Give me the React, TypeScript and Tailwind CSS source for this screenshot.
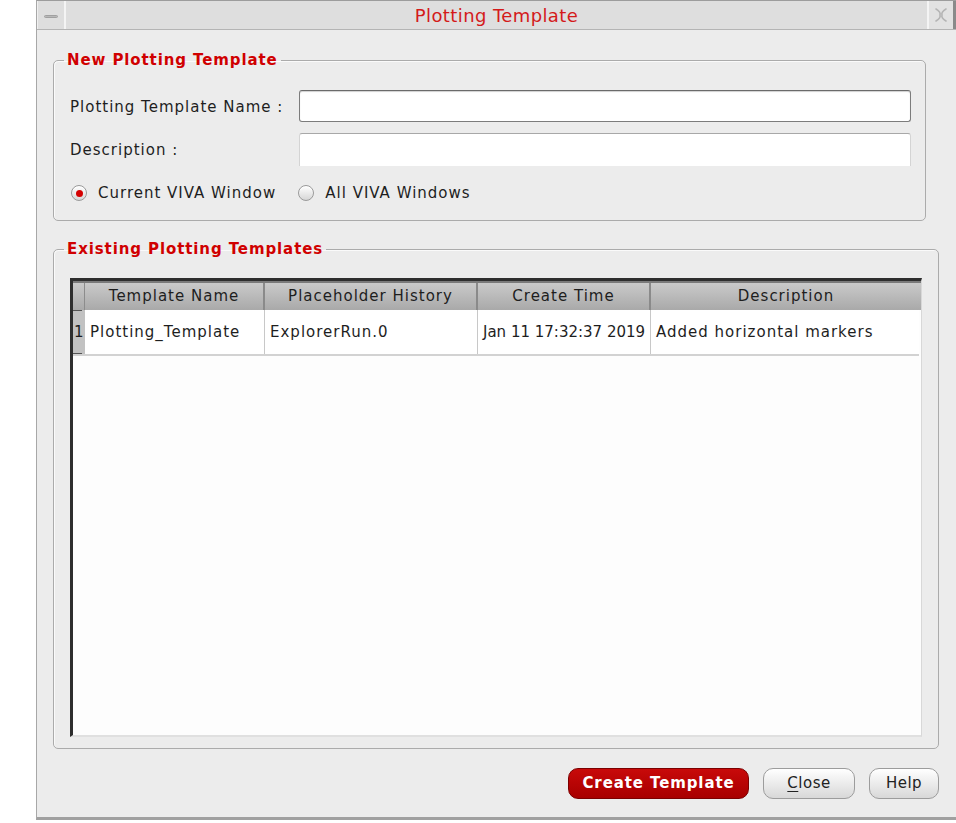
import React from 'react';

const columns = ['Template Name', 'Placeholder History', 'Create Time', 'Description'];

const rows = [
  { name: 'Plotting_Template', history: 'ExplorerRun.0', time: 'Jan 11 17:32:37 2019', description: 'Added horizontal markers' },
];

function Radio({ checked, label }: { checked?: boolean; label: string }) {
  return (
    <label className="flex items-center gap-[11px]">
      <span className="w-[16px] h-[16px] rounded-full border border-[#9a9a9a] bg-gradient-to-b from-white to-[#d6d6d6] flex items-center justify-center shadow-[inset_0_1px_1px_rgba(255,255,255,0.9)]">
        {checked && <span className="w-[7px] h-[7px] rounded-full bg-[#d40000]" />}
      </span>
      <span>{label}</span>
    </label>
  );
}

export default function App() {
  return (
    <div className="w-[956px] h-[823px] bg-white pl-[36px] font-['DejaVu_Sans','Liberation_Sans',sans-serif] text-[15px] tracking-[1px] text-[#1e1e1e]">
      <div className="h-[820px] flex flex-col border-l border-t border-b-[3px] border-l-[#a8a8a8] border-t-[#9c9c9c] border-b-[#a0a0a0] bg-[#ececec] overflow-hidden">
        {/* Title bar */}
        <div className="h-[29px] flex bg-[#dedede] border-b border-[#b4b4b4]">
          <div className="w-[29px] flex items-center justify-center border-r-2 border-r-[#f4f4f4] border-l border-l-[#f0f0f0]">
            <span className="w-[14px] h-[3px] mt-[3px] rounded-sm bg-[#b8b8b8] border border-[#a0a0a0]" />
          </div>
          <div className="flex-1 flex items-center justify-center text-[18px] tracking-[0.4px] text-[#d41a1a]">Plotting Template</div>
          <div className="w-[29px] flex items-center justify-center border-l-2 border-l-[#f4f4f4] border-r-[3px] border-r-[#8a8a8a] bg-[#e2e2e2]">
            <svg width="14" height="16" viewBox="0 0 14 16" fill="none" stroke="#b4b4b4" strokeWidth="1.6" strokeLinecap="round">
              <path d="M2 2Q7 5 6 8Q7 11 2 14" />
              <path d="M12 2Q7 5 8 8Q7 11 12 14" />
            </svg>
          </div>
        </div>

        <div className="flex-1 flex flex-col pl-[16px] pr-[17px]">
          {/* New plotting template */}
          <fieldset className="mt-[21px] mr-[13px] border border-[#ababab] rounded-[5px] pl-[16px] pr-[14px] pt-[21px] pb-[17px] shadow-[inset_1px_1px_0_#fafafa]">
            <legend className="-ml-[6px] px-[3px] text-[#d00000] font-bold leading-[18px] tracking-[0.9px]">New Plotting Template</legend>
            <div className="flex items-center h-[32px]">
              <span className="w-[229px] pt-[2px]">Plotting Template Name :</span>
              <div className="flex-1 h-[32px] bg-white rounded-[3px] border border-[#7c7c7c] border-t-[#6a6a6a] shadow-[inset_0_1px_1px_#d0d0d0]" />
            </div>
            <div className="flex items-center h-[33px] mt-[11px]">
              <span className="w-[229px] pt-[2px]">Description :</span>
              <div className="flex-1 h-[33px] bg-white rounded-t-[3px] border-t border-x border-t-[#a8a8a8] border-x-[#d4d4d4]" />
            </div>
            <div className="flex items-center gap-[22px] h-[20px] mt-[17px] ml-[1px]">
              <Radio checked label="Current VIVA Window" />
              <Radio label="All VIVA Windows" />
            </div>
          </fieldset>

          {/* Existing plotting templates */}
          <fieldset className="flex-1 mt-[19px] border border-[#ababab] rounded-[5px] pl-[16px] pr-[16px] pt-[20px] pb-[11px] flex flex-col shadow-[inset_1px_1px_0_#fafafa]">
            <legend className="-ml-[6px] px-[3px] text-[#d00000] font-bold leading-[18px] tracking-[0.9px]">Existing Plotting Templates</legend>
            <div className="flex-1 flex flex-col border-t-[3px] border-l-[3px] border-[#2e2e2e] border-r border-r-[#d8d8d8] border-b-2 border-b-[#e0e0e0] bg-[#fdfdfd]">
              <div className="grid grid-cols-[12px_180px_213px_173px_1fr] h-[29px] border-t-2 border-t-[#7a7a7a] bg-gradient-to-b from-[#cacaca] to-[#a9a9a9]">
                <div className="border-r border-[#8c8c8c]" />
                {columns.map((col, i) => (
                  <div
                    key={col}
                    className={`flex items-center justify-center ${i < columns.length - 1 ? 'border-r-2 border-r-[#8a8a8a]' : ''}`}
                  >
                    {col}
                  </div>
                ))}
              </div>
              {rows.map((row, i) => (
                <div key={row.name} className="grid grid-cols-[12px_180px_213px_173px_1fr] h-[46px] border-b-2 border-[#d2d2d2] mr-[2px] whitespace-nowrap">
                  <div className="bg-[#c2c2c2] flex flex-col justify-between">
                    <span className="h-[1px] w-[9px] bg-[#555]" />
                    <span className="pl-[1px] leading-none">{i + 1}</span>
                    <span className="h-[1px] w-[9px] bg-[#555]" />
                  </div>
                  <div className="flex items-center pl-[5px] bg-white border-r border-[#c8c8c8]">{row.name}</div>
                  <div className="flex items-center pl-[5px] bg-white border-r border-[#c8c8c8]">{row.history}</div>
                  <div className="flex items-center pl-[5px] bg-white border-r border-[#c8c8c8] tracking-normal overflow-hidden">{row.time}</div>
                  <div className="flex items-center pl-[5px] bg-white">{row.description}</div>
                </div>
              ))}
              <div className="flex-1" />
            </div>
          </fieldset>

          {/* Buttons */}
          <div className="flex justify-end items-center gap-[14px] mt-[18px] mb-[18px] h-[32px]">
            <button className="w-[181px] h-[31px] rounded-[10px] bg-gradient-to-b from-[#c80a0a] to-[#a80000] border border-[#7c0000] text-white font-bold tracking-[0.9px]">
              Create Template
            </button>
            <button className="w-[92px] h-[31px] rounded-[10px] bg-gradient-to-b from-white to-[#d8d8d8] border border-[#9c9c9c] text-[#222] tracking-[0.5px]">
              <span className="underline underline-offset-[3px]">C</span>lose
            </button>
            <button className="w-[70px] h-[31px] rounded-[10px] bg-gradient-to-b from-white to-[#d8d8d8] border border-[#9c9c9c] text-[#222] tracking-[0.5px]">
              Help
            </button>
          </div>
        </div>
      </div>
    </div>
  );
}
